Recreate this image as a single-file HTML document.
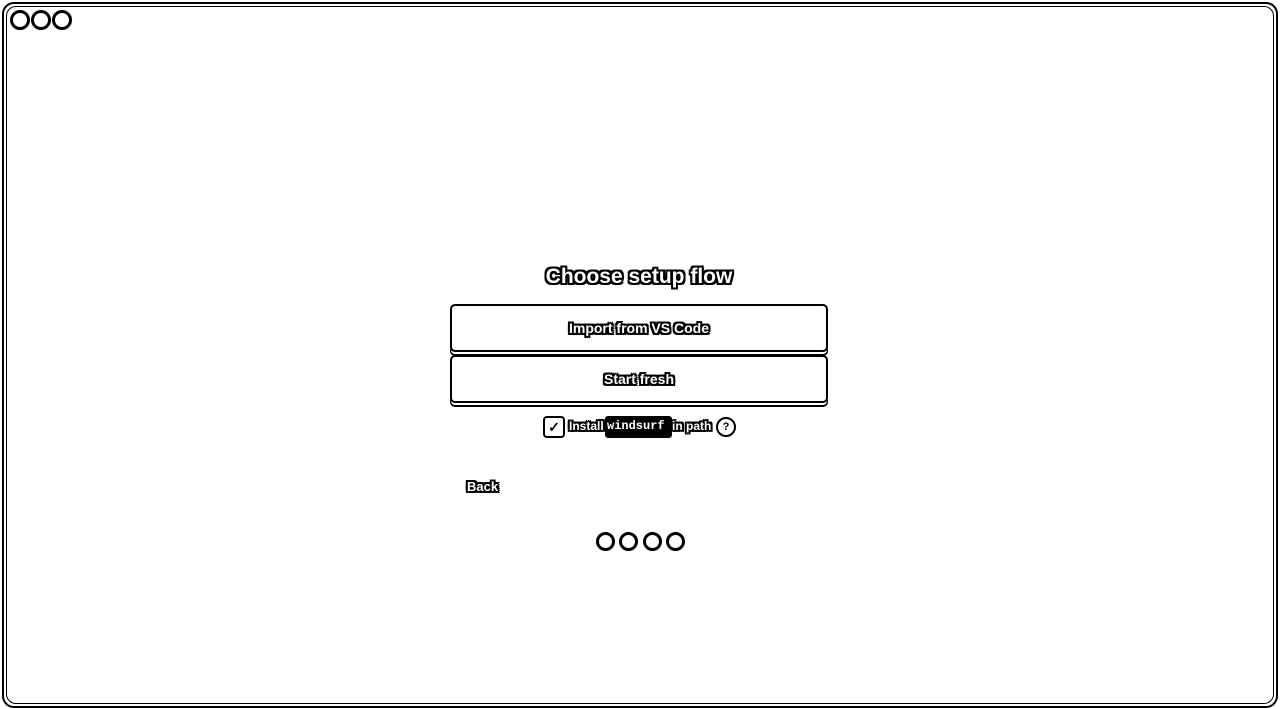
<!DOCTYPE html>
<html><head><meta charset="utf-8"><style>
html,body{margin:0;padding:0;width:1280px;height:709px;background:#fff;overflow:hidden;font-family:"Liberation Sans",sans-serif}
.frame{position:absolute;left:2px;top:2px;width:1272px;height:702px;border:2px solid #000;border-radius:12px}
.frame2{position:absolute;left:6px;top:6px;width:1266px;height:696px;border:1px solid #000;border-radius:10px}
.o{color:#fff;text-shadow:1px 1px 0 #000,-1px -1px 0 #000,1px -1px 0 #000,-1px 1px 0 #000,2px 0 0 #000,-2px 0 0 #000,0 2px 0 #000,0 -2px 0 #000,2px 2px 0 #000,-2px -2px 0 #000,2px -2px 0 #000,-2px 2px 0 #000;font-weight:bold}
.dot{position:absolute;width:14px;height:14px;border:3px solid #000;border-radius:50%;background:#fff}
.btn{position:absolute;left:450px;width:374px;height:44px;border:2px solid #000;border-radius:5px;box-shadow:0 3px 0 -1px #fff,0 4px 0 0 #000}
.btn span{position:absolute;left:0;right:0;top:14px;text-align:center;font-size:14px}
.sd{position:absolute;top:532px;width:13px;height:13px;border:3px solid #000;border-radius:50%}
</style></head><body>
<div class="frame"></div><div class="frame2"></div>
<div class="dot" style="left:10px;top:10px"></div>
<div class="dot" style="left:31px;top:10px"></div>
<div class="dot" style="left:52px;top:10px"></div>
<div class="o" style="position:absolute;left:0;width:1278px;top:265px;text-align:center;font-size:21px">Choose setup flow</div>
<div class="btn" style="top:304px"><span class="o">Import from VS Code</span></div>
<div class="btn" style="top:355px"><span class="o">Start fresh</span></div>
<div style="position:absolute;left:543px;top:416px;width:18px;height:18px;border:2px solid #000;border-radius:4px;font-size:14px;line-height:18px;text-align:center;font-weight:bold">✓</div>
<div class="o" style="position:absolute;left:569px;top:419px;font-size:12px">Install</div>
<div style="position:absolute;left:605px;top:416px;width:63px;height:18px;border:2px solid #000;border-radius:3px;background:#000"></div>
<div style="position:absolute;left:607px;top:419px;font-family:'Liberation Mono',monospace;font-size:12px;color:#fff;font-weight:bold">windsurf</div>
<div class="o" style="position:absolute;left:672px;top:419px;font-size:12px">in path</div>
<div style="position:absolute;left:716px;top:417px;width:16px;height:16px;border:2px solid #000;border-radius:50%;font-size:11px;line-height:16px;text-align:center;font-weight:bold">?</div>
<div class="o" style="position:absolute;left:467px;top:479px;font-size:13px">Back</div>
<div class="sd" style="left:596px"></div>
<div class="sd" style="left:619px"></div>
<div class="sd" style="left:643px"></div>
<div class="sd" style="left:666px"></div>
</body></html>
